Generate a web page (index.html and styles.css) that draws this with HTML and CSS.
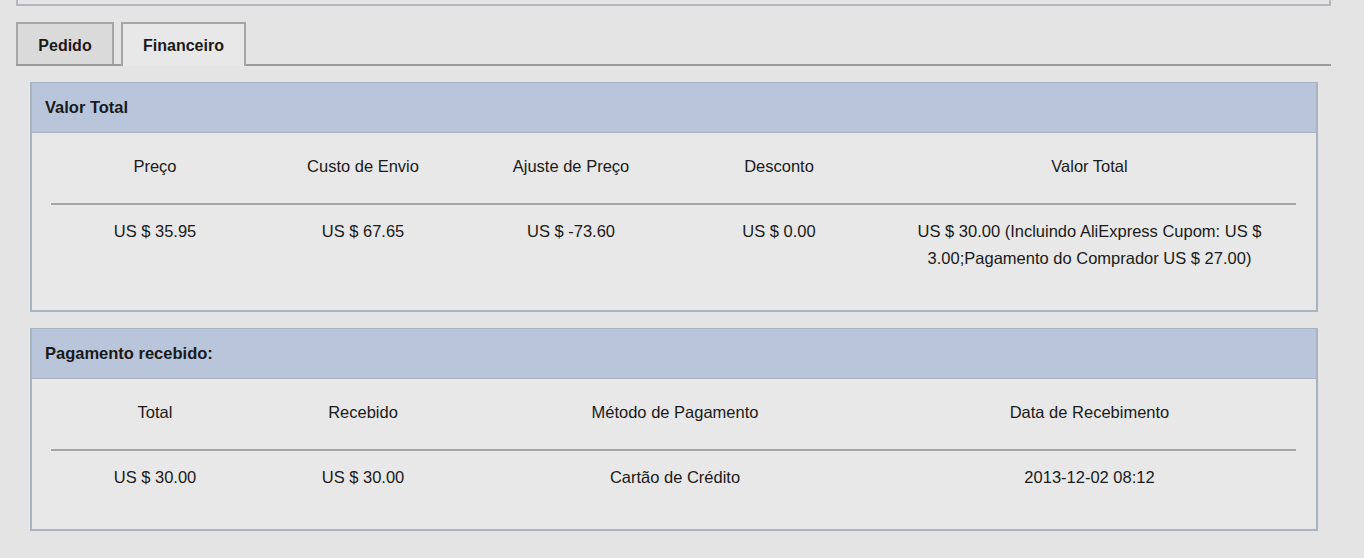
FILE: index.html
```html
<!DOCTYPE html>
<html lang="pt">
<head>
    <meta charset="UTF-8">
    <title>Detalhes do Pedido - Financeiro</title>
    <link rel="stylesheet" href="styles.css">
</head>
<body>
    <div class="topo"></div>

    <div class="abas">
        <div class="aba">Pedido</div>
        <div class="aba ativa">Financeiro</div>
    </div>

    <div class="painel">
        <div class="painel-titulo">Valor Total</div>
        <table>
            <thead>
                <tr>
                    <th class="col-curta">Preço</th>
                    <th class="col-curta">Custo de Envio</th>
                    <th class="col-curta">Ajuste de Preço</th>
                    <th class="col-curta">Desconto</th>
                    <th>Valor Total</th>
                </tr>
            </thead>
            <tbody>
                <tr>
                    <td>US $ 35.95</td>
                    <td>US $ 67.65</td>
                    <td>US $ -73.60</td>
                    <td>US $ 0.00</td>
                    <td class="larga">US $ 30.00 (Incluindo AliExpress Cupom: US $ 3.00;Pagamento do Comprador US $ 27.00)</td>
                </tr>
            </tbody>
        </table>
    </div>

    <div class="painel">
        <div class="painel-titulo">Pagamento recebido:</div>
        <table>
            <thead>
                <tr>
                    <th class="col-curta">Total</th>
                    <th class="col-curta">Recebido</th>
                    <th class="col-media">Método de Pagamento</th>
                    <th>Data de Recebimento</th>
                </tr>
            </thead>
            <tbody>
                <tr>
                    <td>US $ 30.00</td>
                    <td>US $ 30.00</td>
                    <td>Cartão de Crédito</td>
                    <td>2013-12-02 08:12</td>
                </tr>
            </tbody>
        </table>
    </div>
</body>
</html>
```

FILE: styles.css
```css
body { margin: 0; background: #e4e4e4; font-family: "Liberation Sans", Arial, sans-serif; font-size: 16.5px; color: #1a1a1a; }

.topo { margin: 0 33px 0 16px; height: 4px; border: 2px solid #b4b8bc; border-top: none; }

.abas { display: flex; gap: 7px; margin: 16px 33px 0 16px; border-bottom: 2px solid #9c9c9c; height: 42px; }
.aba { width: 94px; height: 40px; border: 2px solid #a6a6a6; border-bottom: none; background: #dadada; font-size: 16px; font-weight: bold; text-align: center; line-height: 43px; }
.aba.ativa { width: 121px; height: 42px; background: #e8e8e8; margin-bottom: -2px; }

.painel { margin: 16px 46px 15px 30px; border: 2px solid #a9b4c3; background: #e8e8e8; }
.painel-titulo { height: 49px; line-height: 48px; padding-left: 13px; background: #b9c5da; border-bottom: 1px solid #a9b4c3; font-size: 16.5px; font-weight: bold; margin-top: -1px; }

table { border-collapse: collapse; width: 1245px; margin: 0 0 0 19px; table-layout: fixed; }
th { font-weight: normal; height: 45px; padding: 20px 0 5px; vertical-align: top; line-height: 27px; border-bottom: 2px solid #a6a6a6; }
td { text-align: center; padding: 13px 0 38px; line-height: 27px; vertical-align: top; }
.col-curta { width: 208px; }
.col-media { width: 416px; }
.larga { padding-left: 22px; padding-right: 22px; }
```
